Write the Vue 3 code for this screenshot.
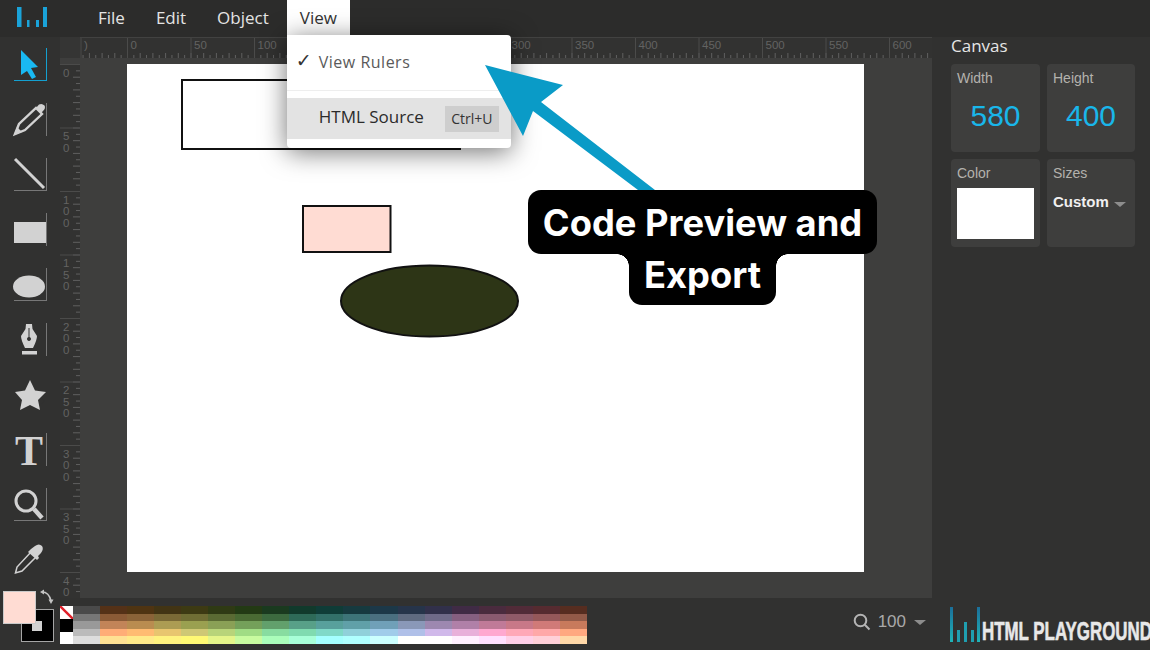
<template>
  <div class="app">
    <!-- TOP BAR -->
    <header class="topbar">
      <svg class="top-logo" width="32" height="22" viewBox="0 0 32 22">
        <rect x="1" y="1" width="4.5" height="20" />
        <rect x="11" y="14" width="2.5" height="7" />
        <rect x="20" y="14" width="3" height="7" />
        <rect x="27" y="1" width="4" height="20" />
      </svg>
      <nav class="menu">
        <div v-for="m in menus" :key="m" class="menu-item">{{ m }}</div>
        <div class="menu-item open">
          View
          <div class="dropdown">
            <div class="drop-row first">
              <span class="check">✓</span>
              <span>View Rulers</span>
            </div>
            <div class="drop-row source">
              <span class="source-text">HTML Source</span>
              <span class="kbd">Ctrl+U</span>
            </div>
          </div>
        </div>
      </nav>
    </header>

    <div class="body">
      <!-- LEFT TOOLS -->
      <aside class="left">
        <div class="tools">
          <div class="tool line-b active">
            <svg width="33" height="33"><polygon class="blue" points="7,2 24,19 17,20 22,29 18,31 13,23 7,27" /></svg>
          </div>
          <div class="tool">
            <svg width="33" height="33">
              <path class="stroke thin" d="M1 31 L5 21 L22 5 L28 11 L11 27 Z" />
              <path class="fill" d="M0 32 L3 24 L8 29 Z" />
              <path class="fill" d="M22 5 L25 1.5 Q28 0 30.5 2.5 Q32 5 29 8 L27 10 Z" />
            </svg>
          </div>
          <div class="tool line-b">
            <svg width="33" height="33"><line class="stroke" x1="1" y1="1" x2="30" y2="30" /></svg>
          </div>
          <div class="tool">
            <svg width="33" height="33"><rect class="fill" x="0" y="9" width="32" height="21" /></svg>
          </div>
          <div class="tool line-b">
            <svg width="33" height="33"><ellipse class="fill" cx="15" cy="18.5" rx="16" ry="11" /></svg>
          </div>
          <div class="tool">
            <svg width="33" height="33">
              <path class="fill" fill-rule="evenodd" d="M12 1 H18 L18.5 6 L23 13 Q23 17 19 25 H11 Q7 17 7 13 L11.5 6 Z M14.5 5 V14 A2 2 0 1 0 15.5 14 V5 Z" />
              <rect class="fill" x="8" y="28" width="15" height="3.5" />
            </svg>
          </div>
          <div class="tool no-line">
            <svg width="33" height="33">
              <polygon class="fill" points="16,2 21,12.5 32,14 24,22 26,32 16,27 6,32 8,22 1,14 11,12.5" />
              <polygon class="dark" points="27,20 31,23 27,26" />
            </svg>
          </div>
          <div class="tool">
            <svg width="33" height="33"><text class="t-glyph" x="1" y="32">T</text></svg>
          </div>
          <div class="tool line-b">
            <svg width="33" height="33">
              <circle class="stroke ring" cx="12" cy="13" r="10" />
              <line class="stroke handle" x1="20" y1="21" x2="28" y2="30" />
            </svg>
          </div>
          <div class="tool no-line">
            <svg width="33" height="33">
              <path class="stroke slim" d="M1.5 30 L3 24 L17 9 L22 14 L8 28 Z" />
              <path class="fill" d="M15 8 L17 6 L21 3 Q25 0 28 3 Q30 6 27 10 L24 13 L25 15 L23 17 L14 9 Z" />
            </svg>
          </div>
        </div>

        <div class="colors">
          <svg class="swap" width="16" height="16" viewBox="0 0 16 16">
            <path d="M3 3 Q10 3 12 12" />
            <path d="M1 3 L5 0.5 V5.5 Z M12 15 L9.5 10.5 H14.5 Z" />
          </svg>
          <div class="back-swatch"><span class="mini"></span></div>
          <div class="front-swatch"></div>
        </div>
      </aside>

      <!-- CENTER -->
      <main class="center">
        <div class="workspace">
          <div class="corner"></div>
          <svg class="ruler-h" width="852" height="21">
            <g v-for="t in hTicks" :key="t.x">
              <line class="tick" :x1="t.x" :x2="t.x" :y1="t.y" y2="20" />
            </g>
            <g v-for="m in hMajors" :key="m.x">
              <line class="major" :x1="m.x" :x2="m.x" y1="0" y2="21" />
              <text class="ruler-text" :x="m.x + 3" y="11">{{ m.label }}</text>
            </g>
          </svg>
          <svg class="ruler-v" width="20" height="534">
            <g v-for="t in vTicks" :key="t.y">
              <line class="tick" :y1="t.y" :y2="t.y" :x1="t.x" x2="20" />
            </g>
            <g v-for="m in vMajors" :key="m.y">
              <line class="major" :y1="m.y" :y2="m.y" x1="0" x2="20" />
              <text v-for="(c, i) in m.digits" :key="i" class="ruler-text" x="3" :y="m.y + 12 + i * 11.5">{{ c }}</text>
            </g>
          </svg>
          <div class="stage">
            <svg class="paper" width="737" height="508">
              <rect class="shape" x="55" y="16" width="278" height="69" fill="#ffffff" />
              <rect class="shape" x="176" y="142" width="87.5" height="46" fill="#ffdcd3" />
              <ellipse class="shape" cx="302.5" cy="237" rx="88.5" ry="35.5" fill="#2d3516" />
            </svg>
          </div>
        </div>

        <div class="bottom">
          <div class="none-col">
            <svg class="none" width="13" height="13"><rect width="13" height="13" fill="#fff" /><line x1="0" y1="0" x2="13" y2="13" stroke="#e0202a" stroke-width="2.4" /></svg>
            <span class="black"></span>
            <span class="white"></span>
          </div>
          <div class="palette">
            <div v-for="(col, i) in palette" :key="i" class="pal-col">
              <span v-for="c in col" :key="c" class="pal-cell" :style="{ background: '#' + c }"></span>
            </div>
          </div>
          <div class="zoom">
            <svg width="18" height="18" viewBox="0 0 18 18">
              <circle class="zoom-ring" cx="7.5" cy="7.5" r="5.8" />
              <line class="zoom-ring" x1="11.8" y1="11.8" x2="16.5" y2="16.5" />
            </svg>
            <span class="zoom-val">100</span>
            <span class="caret"></span>
          </div>
        </div>
      </main>

      <!-- RIGHT PANEL -->
      <aside class="right">
        <div class="panel-title">Canvas</div>
        <div class="cards">
          <div class="card">
            <div class="card-label">Width</div>
            <div class="card-value">580</div>
          </div>
          <div class="card">
            <div class="card-label">Height</div>
            <div class="card-value">400</div>
          </div>
          <div class="card">
            <div class="card-label">Color</div>
            <div class="color-box"></div>
          </div>
          <div class="card">
            <div class="card-label">Sizes</div>
            <div class="sizes">Custom <span class="caret"></span></div>
          </div>
        </div>
        <div class="brand">
          <svg width="31" height="37" viewBox="0 0 31 37">
            <defs>
              <linearGradient id="bars" x1="0" y1="0" x2="0" y2="1">
                <stop offset="0" stop-color="#1b6f9a" />
                <stop offset="1" stop-color="#1fb5b8" />
              </linearGradient>
            </defs>
            <rect x="0" y="1" width="3" height="35" fill="url(#bars)" />
            <rect x="7" y="24" width="3" height="12" fill="#1f9fb0" />
            <rect x="14" y="16" width="3" height="20" fill="#1f9fb0" />
            <rect x="21" y="24" width="3" height="12" fill="#1f9fb0" />
            <rect x="27" y="1" width="3" height="35" fill="url(#bars)" />
          </svg>
          <span class="brand-text">HTML PLAYGROUND</span>
        </div>
      </aside>
    </div>

    <!-- ANNOTATION -->
    <svg class="arrow" width="200" height="140" viewBox="480 60 200 140">
      <polygon points="485,65 563,85 541,102 655,190 638,190 533,111 523,136" />
    </svg>
    <div class="callout">
      <div class="callout-line">Code Preview and</div>
      <div class="callout-line last">Export</div>
    </div>
  </div>
</template>

<script setup>
const menus = ["File", "Edit", "Object"];

/* rulers */
const STEP = 63.5;
const hMajors = [{ x: 1, label: ")" }];
for (let k = 0; k <= 12; k++) {
  hMajors.push({ x: 47.5 + STEP * k, label: String(k * 50) });
}
const hTicks = [];
for (let i = -7; i < 130; i++) {
  const x = 47.5 + (STEP / 10) * i;
  if (x > 850) break;
  hTicks.push({ x, y: i % 2 === 0 ? 15 : 17 });
}
const vMajors = [];
for (let k = 0; k <= 8; k++) {
  // last label runs off the ruler, same as the app
  const digits = String(k * 50).split("").slice(0, k === 8 ? 2 : 3);
  vMajors.push({ y: 0.5 + STEP * k, digits });
}
const vTicks = [];
for (let i = 1; i < 84; i++) {
  vTicks.push({ y: 0.5 + (STEP / 10) * i, x: i % 2 === 0 ? 13 : 16 });
}

/* palette columns, dark row on top */
const palette = [
  ["4a4a4a", "777777", "999999", "bbbbbb", "dddddd"],
  ["543117", "8a5a36", "c28458", "ffad77", "ffe193"],
  ["4f3412", "8a6338", "b98c50", "ffbb72", "ffea8a"],
  ["423414", "7a6936", "ac9c53", "e8c56f", "fff27f"],
  ["3d3a13", "6f6d34", "9aa050", "cfc875", "fff974"],
  ["2f3a14", "5a6a33", "8aa056", "b8d47a", "e4f58a"],
  ["233a14", "4a6a33", "74a05a", "a0dc85", "c8fba0"],
  ["1a3a1f", "3c6a3f", "62a06c", "88dca0", "aafdba"],
  ["113a2c", "2e6a58", "58a088", "80dbb0", "a8ffd8"],
  ["0f3c37", "326f68", "58a09c", "80d9c8", "a5ffff"],
  ["163a3f", "3d7478", "60a0a8", "90d0da", "b0ffff"],
  ["1c3848", "4a6f80", "70a0b8", "a0ccea", "ccffff"],
  ["26344a", "5f6a80", "8a98b8", "b0c0e8", "fffffe"],
  ["31304a", "6f6a88", "9d88b0", "d0b8ea", "fffeff"],
  ["402b45", "855f80", "b080a8", "e8b0da", "fff0ff"],
  ["4a2b3e", "8a5a70", "c07a98", "ffa8d0", "ffe0ff"],
  ["512b38", "8f5a68", "c87888", "ffa8b8", "ffd0e8"],
  ["562b30", "95585a", "d07a78", "ffa8a8", "ffd0d8"],
  ["562d20", "925a48", "c87a5c", "ffa880", "ffd8a8"],
];
</script>

<style>
body {
  margin: 0;
  background: #313130;
}
</style>

<style scoped>
.app {
  position: relative;
  width: 1150px;
  height: 650px;
  overflow: hidden;
  display: flex;
  flex-direction: column;
  background: #313130;
  font-family: "Open Sans", "Liberation Sans", sans-serif;
}

/* TOP BAR */
.topbar {
  height: 37px;
  flex-shrink: 0;
  display: flex;
  background: #2c2c2b;
}
.top-logo {
  margin: 6px 0 0 16px;
  fill: #1aa3d9;
}
.menu {
  display: flex;
  gap: 5px;
  margin-left: 37px;
  position: relative;
  z-index: 3;
}
.menu-item {
  position: relative;
  padding: 0 13px;
  height: 35px;
  line-height: 35px;
  font-size: 17px;
  color: #e4e4e4;
}
.menu-item.open {
  background: #fff;
  color: #333;
}
.dropdown {
  position: absolute;
  top: 35px;
  left: 0;
  width: 224px;
  padding-bottom: 9px;
  background: #fff;
  border-radius: 0 4px 4px 4px;
  box-shadow: 0 4px 26px rgba(0, 0, 0, 0.55);
}
.drop-row {
  display: flex;
  align-items: center;
  font-size: 17px;
}
.drop-row.first {
  height: 55px;
  font-size: 16px;
  color: #5a5a5a;
  border-bottom: 1px solid #eee;
  margin-bottom: 7px;
  padding-left: 9px;
  letter-spacing: 0.5px;
}
.check {
  width: 23px;
  color: #333;
  font-family: "DejaVu Sans", sans-serif;
  font-size: 19px;
  line-height: 19px;
  margin-top: -4px;
}
.drop-row.source {
  height: 41px;
  padding-left: 32px;
  background: #e3e3e3;
  color: #2b2b2b;
  justify-content: space-between;
  padding-right: 12px;
}
.source-text {
  margin-top: -4px;
}
.kbd {
  width: 54px;
  height: 26px;
  line-height: 26px;
  text-align: center;
  background: #cecece;
  font-size: 14px;
  color: #333;
}

/* LAYOUT */
.body {
  flex: 1;
  display: flex;
  min-height: 0;
}
.left {
  width: 60px;
  flex-shrink: 0;
}
.center {
  width: 872px;
  flex-shrink: 0;
  display: flex;
  flex-direction: column;
}
.right {
  flex: 1;
  min-width: 0;
  padding-left: 19px;
  display: flex;
  flex-direction: column;
}

/* TOOLS */
.tools {
  display: flex;
  flex-direction: column;
  gap: 22px;
  padding: 11px 0 0 14px;
}
.tool {
  width: 33px;
  height: 33px;
  box-sizing: border-box;
  border-right: 1px solid #777;
}
.tool svg {
  display: block;
  overflow: visible;
}
.tool.line-b {
  border-bottom: 1px solid #777;
}
.tool.no-line {
  border-right: none;
}
.tool.active {
  border-color: #14a0d0;
}
.blue {
  fill: #19b9f2;
}
.fill {
  fill: #d2d2d2;
}
.dark {
  fill: #313130;
}
.stroke {
  fill: none;
  stroke: #d2d2d2;
  stroke-width: 3;
}
.stroke.thin {
  stroke-width: 2.4;
}
.stroke.slim {
  stroke-width: 1.5;
}
.stroke.ring {
  stroke-width: 3;
}
.stroke.handle {
  stroke-width: 4.5;
}
.t-glyph {
  font-family: "Liberation Serif", serif;
  font-weight: 700;
  font-size: 42px;
  fill: #d2d2d2;
}

/* COLOR WIDGET */
.colors {
  position: relative;
  height: 60px;
  margin-top: 13px;
}
.front-swatch {
  position: absolute;
  left: 3px;
  top: 2px;
  width: 33px;
  height: 33px;
  box-sizing: border-box;
  background: #ffdcd3;
  border: 1px solid #c9c9c9;
}
.back-swatch {
  position: absolute;
  left: 21px;
  top: 20px;
  width: 33px;
  height: 33px;
  box-sizing: border-box;
  background: #000;
  border: 1px solid #a5a5a5;
}
.mini {
  position: absolute;
  left: 10px;
  top: 11px;
  width: 10px;
  height: 10px;
  background: #d2d2d2;
}
.swap {
  position: absolute;
  left: 39px;
  top: 0;
  fill: none;
}
.swap path:first-child {
  stroke: #c4c4c4;
  stroke-width: 1.6;
}
.swap path:last-child {
  fill: #c4c4c4;
}

/* WORKSPACE */
.workspace {
  height: 561px;
  flex-shrink: 0;
  display: grid;
  grid-template-columns: 20px 852px;
  grid-template-rows: 21px 540px;
  background: #3e3e3d;
}
.corner {
  background: #353534;
}
.ruler-h {
  display: block;
  background: #323231;
  border-top: 1px solid #424241;
  box-sizing: border-box;
}
.ruler-v {
  display: block;
  margin-top: 6px;
  background: #323231;
}
.tick {
  stroke: #606060;
  stroke-width: 1;
}
.major {
  stroke: #4b4b4a;
  stroke-width: 1;
}
.ruler-text {
  font-family: "Liberation Sans", sans-serif;
  font-size: 11.5px;
  fill: #636362;
}
.stage {
  padding: 6px 68px 26px 47px;
}
.paper {
  display: block;
  background: #fff;
}
.shape {
  stroke: #111;
  stroke-width: 2;
}

/* BOTTOM STRIP */
.bottom {
  flex: 1;
  display: flex;
  align-items: flex-start;
  padding-top: 8px;
}
.none-col {
  width: 13px;
  display: flex;
  flex-direction: column;
}
.none {
  display: block;
}
.black,
.white {
  display: block;
  height: 12.5px;
  background: #000;
}
.white {
  background: #fff;
}
.palette {
  display: grid;
  grid-template-columns: 27px repeat(18, 27.05px);
}
.pal-col {
  display: flex;
  flex-direction: column;
}
.pal-cell {
  display: block;
  height: 7.6px;
}
.zoom {
  margin-left: auto;
  margin-right: 6px;
  padding-top: 6px;
  display: flex;
  align-items: center;
  gap: 7px;
}
.zoom-ring {
  fill: none;
  stroke: #b4b4b4;
  stroke-width: 2;
}
.zoom-val {
  font-family: "Liberation Sans", sans-serif;
  font-size: 17px;
  color: #a9a9a9;
}
.caret {
  display: inline-block;
  width: 0;
  height: 0;
  margin-left: 1px;
  border-left: 6px solid transparent;
  border-right: 6px solid transparent;
  border-top: 5px solid #8d8d8d;
}

/* RIGHT PANEL */
.panel-title {
  height: 27px;
  line-height: 18px;
  font-size: 17px;
  color: #e6e6e6;
}
.cards {
  display: grid;
  grid-template-columns: 89px 88px;
  grid-auto-rows: 88px;
  gap: 7px;
}
.card {
  background: #3e3e3d;
  border-radius: 4px;
  padding: 6px;
  font-family: "Liberation Sans", sans-serif;
}
.card-label {
  font-size: 14px;
  color: #b4b2ad;
}
.card-value {
  margin-top: 13px;
  text-align: center;
  font-size: 30px;
  color: #19b6ea;
}
.color-box {
  margin-top: 7px;
  width: 77px;
  height: 51px;
  background: #fff;
}
.sizes {
  margin-top: 12px;
  font-size: 15px;
  font-weight: 700;
  color: #f0f0f0;
}
.brand {
  margin-top: auto;
  margin-bottom: 7px;
  display: flex;
  align-items: flex-end;
  gap: 1px;
  margin-left: -1px;
  white-space: nowrap;
}
.brand svg {
  flex-shrink: 0;
}
.brand-text {
  display: inline-block;
  font-family: "Liberation Sans", sans-serif;
  font-weight: 700;
  font-size: 26px;
  line-height: 24px;
  color: #e8e8e8;
  -webkit-text-stroke: 0.6px #e8e8e8;
  transform: scaleX(0.65);
  transform-origin: left bottom;
}

/* ANNOTATION */
.arrow {
  position: absolute;
  left: 480px;
  top: 60px;
  z-index: 4;
  fill: #0a9bc7;
}
.callout {
  position: absolute;
  left: 528px;
  top: 190px;
  width: 349px;
  z-index: 5;
  display: flex;
  flex-direction: column;
  align-items: center;
  font-family: Inter, "Liberation Sans", sans-serif;
  font-weight: 700;
  font-size: 36.3px;
  color: #fff;
}
.callout-line {
  width: 100%;
  box-sizing: border-box;
  height: 64px;
  line-height: 66px;
  text-align: center;
  background: #000;
  border-radius: 13px;
  white-space: nowrap;
}
.callout-line.last {
  position: relative;
  width: 147px;
  height: 51px;
  line-height: 42px;
  border-radius: 0 0 13px 13px;
}
.callout-line.last::before,
.callout-line.last::after {
  content: "";
  position: absolute;
  top: 0;
  width: 12px;
  height: 12px;
}
.callout-line.last::before {
  left: -12px;
  background: radial-gradient(circle at 0 100%, transparent 11.5px, #000 12px);
}
.callout-line.last::after {
  right: -12px;
  background: radial-gradient(circle at 100% 100%, transparent 11.5px, #000 12px);
}
</style>
